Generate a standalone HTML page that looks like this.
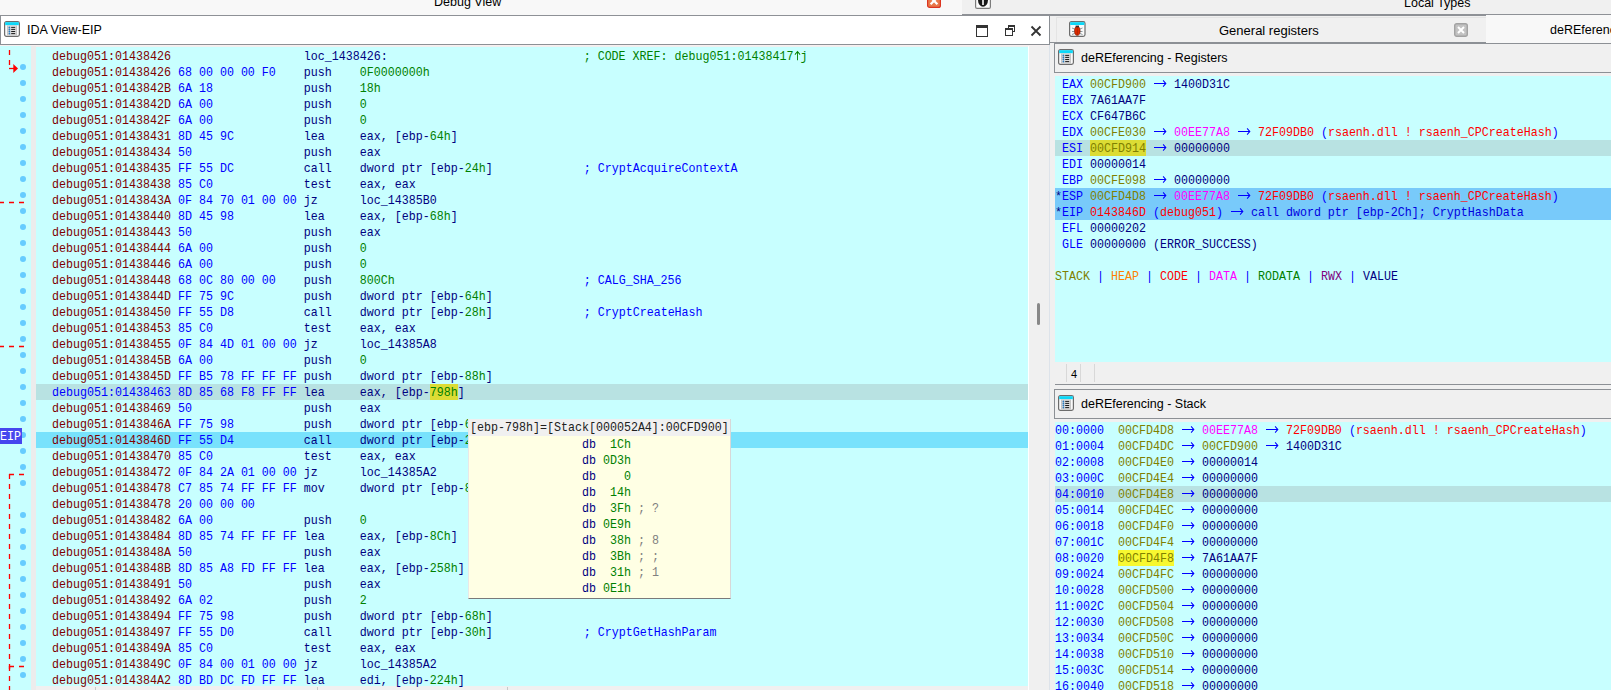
<!DOCTYPE html><html><head><meta charset="utf-8"><style>
*{margin:0;padding:0;box-sizing:border-box}
html,body{width:1611px;height:690px;overflow:hidden;background:#f0f0f0;position:relative}
.a{position:absolute}
.sans{font-family:"Liberation Sans",sans-serif;font-size:12.5px;color:#000;white-space:pre}
.m{font-family:"Liberation Mono",monospace;font-size:11.667px;line-height:16px;height:16px;white-space:pre;position:absolute;transform:translateY(1px) scaleY(1.17);transform-origin:0 11.1px}
.ar{display:inline-block;width:14px;height:16px;vertical-align:top;position:relative}
</style></head><body><div class="a" style="left:0;top:0;width:962px;height:15px;background:#f8f8f8"></div>
<div class="a" style="left:962px;top:0;width:649px;height:15px;background:#f0f0f0"></div>
<div class="a" style="left:0;top:15px;width:962px;height:1px;background:#8e9196"></div>
<div class="a" style="left:962px;top:14px;width:649px;height:2px;background:#8e9196"></div>
<div class="a sans" style="left:434px;top:-5.5px;line-height:15px">Debug View</div>
<div class="a sans" style="left:1404px;top:-4px;line-height:15px">Local Types</div>
<svg class="a" style="left:927px;top:-7px" width="14" height="15"><rect x="0.6" y="0.6" width="12.8" height="13.8" rx="2" fill="#e8784a" stroke="#dc3420" stroke-width="1.2"/><path d="M3.6 4.5L10.4 11.2M10.4 4.5L3.6 11.2" stroke="#fff" stroke-width="2.2"/></svg>
<svg class="a" style="left:975px;top:-7px" width="16" height="16"><rect x="0.6" y="0.6" width="14.8" height="14.8" rx="1.5" fill="#fcfcfc" stroke="#7c7c7c" stroke-width="1.2"/><ellipse cx="8" cy="7" rx="5" ry="6.8" fill="#1a1a1a"/><path d="M8 6.5V12" stroke="#fff" stroke-width="1.6"/></svg>
<div class="a" style="left:0;top:16px;width:1050px;height:29px;background:#fff;border:1px solid #8c9095;border-top:none"></div>
<svg class="a" style="left:4px;top:21px" width="16" height="16"><rect x="0.6" y="0.6" width="14.8" height="14.8" rx="1.8" fill="#fafafa" stroke="#6c6c6c" stroke-width="1.2"/><rect x="1.2" y="1.2" width="13.6" height="3" fill="#0cd8f8"/><rect x="3" y="4.4" width="10" height="10" fill="#c4c4c4"/><rect x="4" y="5" width="8" height="8.6" fill="#dcdcdc"/><g fill="#2a7cc0"><circle cx="5.4" cy="6.4" r="0.9"/><circle cx="5.4" cy="8.4" r="0.9"/><circle cx="5.4" cy="10.5" r="0.9"/><circle cx="5.4" cy="12.6" r="0.9"/></g><g stroke="#1c1c1c" stroke-width="1"><path d="M7.2 6.4H11.2M7.2 8.4H11.2M7.2 10.5H11.2M7.2 12.6H11.2"/></g></svg>
<div class="a sans" style="left:27px;top:23px;line-height:15px">IDA View-EIP</div>
<div class="a" style="left:976px;top:25px;width:12px;height:12px;border:1.3px solid #333;border-top:3.5px solid #333"></div>
<div class="a" style="left:1008px;top:25px;width:7px;height:7px;border:1.3px solid #333;border-top:2.5px solid #333"></div>
<div class="a" style="left:1005px;top:28px;width:8px;height:8px;background:#fff;border:1.3px solid #333;border-top:2.5px solid #333"></div>
<svg class="a" style="left:1030px;top:25px" width="12" height="12"><path d="M1.5 1.5L10.5 10.5M10.5 1.5L1.5 10.5" stroke="#333" stroke-width="1.8"/></svg>
<div class="a" style="left:0;top:45px;width:1050px;height:1px;background:#f6f0f0"></div>
<div class="a" style="left:0;top:46px;width:31px;height:644px;background:#c8ffff"></div>
<div class="a" style="left:31px;top:46px;width:5px;height:644px;background:#ececec"></div>
<div class="a" style="left:36px;top:47px;width:992px;height:639px;background:#c8ffff"></div>
<div class="a" style="left:36px;top:686px;width:992px;height:4px;background:#f0f0f0"></div>
<div class="a" style="left:1028px;top:46px;width:1px;height:644px;background:#fff"></div>
<div class="a" style="left:95px;top:687px;width:1px;height:3px;background:#c8c8c8"></div>
<div class="a" style="left:317px;top:687px;width:1px;height:3px;background:#c8c8c8"></div>
<div class="a" style="left:507px;top:687px;width:1px;height:3px;background:#c8c8c8"></div>
<div class="a" style="left:1029px;top:46px;width:20px;height:644px;background:#f0f0f0"></div>
<div class="a" style="left:1049px;top:46px;width:1px;height:644px;background:#dde3ea"></div>
<div class="a" style="left:1037px;top:303px;width:3px;height:22px;background:#888;border-radius:2px"></div>
<div class="a" style="left:36px;top:384px;width:992px;height:16px;background:#b8e2e2"></div>
<div class="a" style="left:36px;top:432px;width:992px;height:16px;background:#78e2fc"></div>
<div class="a" style="left:430px;top:384px;width:28px;height:16px;background:#dcdc34"></div>
<div class="m" style="left:52px;top:48px"><span style="color:#800000">debug051:01438426</span>                   <span style="color:#000080">loc_1438426:</span>                            <span style="color:#008000">; CODE XREF: debug051:01438417</span><svg class="ar" width="7" height="16" style="width:7px"><path d="M3.5 3.6V11.2M0.9 6.4L3.5 3.8L6.1 6.4" stroke="#008000" stroke-width="0.9" fill="none"/></svg><span style="color:#008000">j</span></div>
<div class="m" style="left:52px;top:64px"><span style="color:#800000">debug051:01438426</span> <span style="color:#0000ff">68 00 00 00 F0   </span> <span style="color:#000080">push    </span><span style="color:#008000">0F0000000h</span></div>
<div class="m" style="left:52px;top:80px"><span style="color:#800000">debug051:0143842B</span> <span style="color:#0000ff">6A 18            </span> <span style="color:#000080">push    </span><span style="color:#008000">18h</span></div>
<div class="m" style="left:52px;top:96px"><span style="color:#800000">debug051:0143842D</span> <span style="color:#0000ff">6A 00            </span> <span style="color:#000080">push    </span><span style="color:#008000">0</span></div>
<div class="m" style="left:52px;top:112px"><span style="color:#800000">debug051:0143842F</span> <span style="color:#0000ff">6A 00            </span> <span style="color:#000080">push    </span><span style="color:#008000">0</span></div>
<div class="m" style="left:52px;top:128px"><span style="color:#800000">debug051:01438431</span> <span style="color:#0000ff">8D 45 9C         </span> <span style="color:#000080">lea     </span><span style="color:#000080">eax, [ebp-</span><span style="color:#008000">64h</span><span style="color:#000080">]</span></div>
<div class="m" style="left:52px;top:144px"><span style="color:#800000">debug051:01438434</span> <span style="color:#0000ff">50               </span> <span style="color:#000080">push    </span><span style="color:#000080">eax</span></div>
<div class="m" style="left:52px;top:160px"><span style="color:#800000">debug051:01438435</span> <span style="color:#0000ff">FF 55 DC         </span> <span style="color:#000080">call    </span><span style="color:#000080">dword ptr [ebp-</span><span style="color:#008000">24h</span><span style="color:#000080">]</span>             <span style="color:#0000ff">; CryptAcquireContextA</span></div>
<div class="m" style="left:52px;top:176px"><span style="color:#800000">debug051:01438438</span> <span style="color:#0000ff">85 C0            </span> <span style="color:#000080">test    </span><span style="color:#000080">eax, eax</span></div>
<div class="m" style="left:52px;top:192px"><span style="color:#800000">debug051:0143843A</span> <span style="color:#0000ff">0F 84 70 01 00 00</span> <span style="color:#000080">jz      </span><span style="color:#000080">loc_14385B0</span></div>
<div class="m" style="left:52px;top:208px"><span style="color:#800000">debug051:01438440</span> <span style="color:#0000ff">8D 45 98         </span> <span style="color:#000080">lea     </span><span style="color:#000080">eax, [ebp-</span><span style="color:#008000">68h</span><span style="color:#000080">]</span></div>
<div class="m" style="left:52px;top:224px"><span style="color:#800000">debug051:01438443</span> <span style="color:#0000ff">50               </span> <span style="color:#000080">push    </span><span style="color:#000080">eax</span></div>
<div class="m" style="left:52px;top:240px"><span style="color:#800000">debug051:01438444</span> <span style="color:#0000ff">6A 00            </span> <span style="color:#000080">push    </span><span style="color:#008000">0</span></div>
<div class="m" style="left:52px;top:256px"><span style="color:#800000">debug051:01438446</span> <span style="color:#0000ff">6A 00            </span> <span style="color:#000080">push    </span><span style="color:#008000">0</span></div>
<div class="m" style="left:52px;top:272px"><span style="color:#800000">debug051:01438448</span> <span style="color:#0000ff">68 0C 80 00 00   </span> <span style="color:#000080">push    </span><span style="color:#008000">800Ch</span>                           <span style="color:#0000ff">; CALG_SHA_256</span></div>
<div class="m" style="left:52px;top:288px"><span style="color:#800000">debug051:0143844D</span> <span style="color:#0000ff">FF 75 9C         </span> <span style="color:#000080">push    </span><span style="color:#000080">dword ptr [ebp-</span><span style="color:#008000">64h</span><span style="color:#000080">]</span></div>
<div class="m" style="left:52px;top:304px"><span style="color:#800000">debug051:01438450</span> <span style="color:#0000ff">FF 55 D8         </span> <span style="color:#000080">call    </span><span style="color:#000080">dword ptr [ebp-</span><span style="color:#008000">28h</span><span style="color:#000080">]</span>             <span style="color:#0000ff">; CryptCreateHash</span></div>
<div class="m" style="left:52px;top:320px"><span style="color:#800000">debug051:01438453</span> <span style="color:#0000ff">85 C0            </span> <span style="color:#000080">test    </span><span style="color:#000080">eax, eax</span></div>
<div class="m" style="left:52px;top:336px"><span style="color:#800000">debug051:01438455</span> <span style="color:#0000ff">0F 84 4D 01 00 00</span> <span style="color:#000080">jz      </span><span style="color:#000080">loc_14385A8</span></div>
<div class="m" style="left:52px;top:352px"><span style="color:#800000">debug051:0143845B</span> <span style="color:#0000ff">6A 00            </span> <span style="color:#000080">push    </span><span style="color:#008000">0</span></div>
<div class="m" style="left:52px;top:368px"><span style="color:#800000">debug051:0143845D</span> <span style="color:#0000ff">FF B5 78 FF FF FF</span> <span style="color:#000080">push    </span><span style="color:#000080">dword ptr [ebp-</span><span style="color:#008000">88h</span><span style="color:#000080">]</span></div>
<div class="m" style="left:52px;top:384px"><span style="color:#0000ff">debug051:01438463</span> <span style="color:#0000ff">8D 85 68 F8 FF FF</span> <span style="color:#000080">lea     </span><span style="color:#000080">eax, [ebp-</span><span style="color:#008000">798h</span><span style="color:#000080">]</span></div>
<div class="m" style="left:52px;top:400px"><span style="color:#800000">debug051:01438469</span> <span style="color:#0000ff">50               </span> <span style="color:#000080">push    </span><span style="color:#000080">eax</span></div>
<div class="m" style="left:52px;top:416px"><span style="color:#800000">debug051:0143846A</span> <span style="color:#0000ff">FF 75 98         </span> <span style="color:#000080">push    </span><span style="color:#000080">dword ptr [ebp-</span><span style="color:#008000">68h</span><span style="color:#000080">]</span></div>
<div class="m" style="left:52px;top:432px"><span style="color:#800000">debug051:0143846D</span> <span style="color:#0000ff">FF 55 D4         </span> <span style="color:#000080">call    </span><span style="color:#000080">dword ptr [ebp-</span><span style="color:#008000">2Ch</span><span style="color:#000080">]</span></div>
<div class="m" style="left:52px;top:448px"><span style="color:#800000">debug051:01438470</span> <span style="color:#0000ff">85 C0            </span> <span style="color:#000080">test    </span><span style="color:#000080">eax, eax</span></div>
<div class="m" style="left:52px;top:464px"><span style="color:#800000">debug051:01438472</span> <span style="color:#0000ff">0F 84 2A 01 00 00</span> <span style="color:#000080">jz      </span><span style="color:#000080">loc_14385A2</span></div>
<div class="m" style="left:52px;top:480px"><span style="color:#800000">debug051:01438478</span> <span style="color:#0000ff">C7 85 74 FF FF FF</span> <span style="color:#000080">mov     </span><span style="color:#000080">dword ptr [ebp-</span><span style="color:#008000">8Ch</span><span style="color:#000080">], </span><span style="color:#008000">20h</span></div>
<div class="m" style="left:52px;top:496px"><span style="color:#800000">debug051:01438478</span> <span style="color:#0000ff">20 00 00 00      </span></div>
<div class="m" style="left:52px;top:512px"><span style="color:#800000">debug051:01438482</span> <span style="color:#0000ff">6A 00            </span> <span style="color:#000080">push    </span><span style="color:#008000">0</span></div>
<div class="m" style="left:52px;top:528px"><span style="color:#800000">debug051:01438484</span> <span style="color:#0000ff">8D 85 74 FF FF FF</span> <span style="color:#000080">lea     </span><span style="color:#000080">eax, [ebp-</span><span style="color:#008000">8Ch</span><span style="color:#000080">]</span></div>
<div class="m" style="left:52px;top:544px"><span style="color:#800000">debug051:0143848A</span> <span style="color:#0000ff">50               </span> <span style="color:#000080">push    </span><span style="color:#000080">eax</span></div>
<div class="m" style="left:52px;top:560px"><span style="color:#800000">debug051:0143848B</span> <span style="color:#0000ff">8D 85 A8 FD FF FF</span> <span style="color:#000080">lea     </span><span style="color:#000080">eax, [ebp-</span><span style="color:#008000">258h</span><span style="color:#000080">]</span></div>
<div class="m" style="left:52px;top:576px"><span style="color:#800000">debug051:01438491</span> <span style="color:#0000ff">50               </span> <span style="color:#000080">push    </span><span style="color:#000080">eax</span></div>
<div class="m" style="left:52px;top:592px"><span style="color:#800000">debug051:01438492</span> <span style="color:#0000ff">6A 02            </span> <span style="color:#000080">push    </span><span style="color:#008000">2</span></div>
<div class="m" style="left:52px;top:608px"><span style="color:#800000">debug051:01438494</span> <span style="color:#0000ff">FF 75 98         </span> <span style="color:#000080">push    </span><span style="color:#000080">dword ptr [ebp-</span><span style="color:#008000">68h</span><span style="color:#000080">]</span></div>
<div class="m" style="left:52px;top:624px"><span style="color:#800000">debug051:01438497</span> <span style="color:#0000ff">FF 55 D0         </span> <span style="color:#000080">call    </span><span style="color:#000080">dword ptr [ebp-</span><span style="color:#008000">30h</span><span style="color:#000080">]</span>             <span style="color:#0000ff">; CryptGetHashParam</span></div>
<div class="m" style="left:52px;top:640px"><span style="color:#800000">debug051:0143849A</span> <span style="color:#0000ff">85 C0            </span> <span style="color:#000080">test    </span><span style="color:#000080">eax, eax</span></div>
<div class="m" style="left:52px;top:656px"><span style="color:#800000">debug051:0143849C</span> <span style="color:#0000ff">0F 84 00 01 00 00</span> <span style="color:#000080">jz      </span><span style="color:#000080">loc_14385A2</span></div>
<div class="m" style="left:52px;top:672px"><span style="color:#800000">debug051:014384A2</span> <span style="color:#0000ff">8D BD DC FD FF FF</span> <span style="color:#000080">lea     </span><span style="color:#000080">edi, [ebp-</span><span style="color:#008000">224h</span><span style="color:#000080">]</span></div>
<div class="a" style="left:20px;top:64px;width:6px;height:6px;border-radius:50%;background:#66ccff"></div>
<div class="a" style="left:20px;top:80px;width:6px;height:6px;border-radius:50%;background:#66ccff"></div>
<div class="a" style="left:20px;top:96px;width:6px;height:6px;border-radius:50%;background:#66ccff"></div>
<div class="a" style="left:20px;top:112px;width:6px;height:6px;border-radius:50%;background:#66ccff"></div>
<div class="a" style="left:20px;top:128px;width:6px;height:6px;border-radius:50%;background:#66ccff"></div>
<div class="a" style="left:20px;top:144px;width:6px;height:6px;border-radius:50%;background:#66ccff"></div>
<div class="a" style="left:20px;top:160px;width:6px;height:6px;border-radius:50%;background:#66ccff"></div>
<div class="a" style="left:20px;top:176px;width:6px;height:6px;border-radius:50%;background:#66ccff"></div>
<div class="a" style="left:20px;top:192px;width:6px;height:6px;border-radius:50%;background:#66ccff"></div>
<div class="a" style="left:20px;top:208px;width:6px;height:6px;border-radius:50%;background:#66ccff"></div>
<div class="a" style="left:20px;top:224px;width:6px;height:6px;border-radius:50%;background:#66ccff"></div>
<div class="a" style="left:20px;top:240px;width:6px;height:6px;border-radius:50%;background:#66ccff"></div>
<div class="a" style="left:20px;top:256px;width:6px;height:6px;border-radius:50%;background:#66ccff"></div>
<div class="a" style="left:20px;top:272px;width:6px;height:6px;border-radius:50%;background:#66ccff"></div>
<div class="a" style="left:20px;top:288px;width:6px;height:6px;border-radius:50%;background:#66ccff"></div>
<div class="a" style="left:20px;top:304px;width:6px;height:6px;border-radius:50%;background:#66ccff"></div>
<div class="a" style="left:20px;top:320px;width:6px;height:6px;border-radius:50%;background:#66ccff"></div>
<div class="a" style="left:20px;top:336px;width:6px;height:6px;border-radius:50%;background:#66ccff"></div>
<div class="a" style="left:20px;top:352px;width:6px;height:6px;border-radius:50%;background:#66ccff"></div>
<div class="a" style="left:20px;top:368px;width:6px;height:6px;border-radius:50%;background:#66ccff"></div>
<div class="a" style="left:20px;top:384px;width:6px;height:6px;border-radius:50%;background:#66ccff"></div>
<div class="a" style="left:20px;top:400px;width:6px;height:6px;border-radius:50%;background:#66ccff"></div>
<div class="a" style="left:20px;top:416px;width:6px;height:6px;border-radius:50%;background:#66ccff"></div>
<div class="a" style="left:20px;top:432px;width:6px;height:6px;border-radius:50%;background:#66ccff"></div>
<div class="a" style="left:20px;top:448px;width:6px;height:6px;border-radius:50%;background:#66ccff"></div>
<div class="a" style="left:20px;top:464px;width:6px;height:6px;border-radius:50%;background:#66ccff"></div>
<div class="a" style="left:20px;top:480px;width:6px;height:6px;border-radius:50%;background:#66ccff"></div>
<div class="a" style="left:20px;top:512px;width:6px;height:6px;border-radius:50%;background:#66ccff"></div>
<div class="a" style="left:20px;top:528px;width:6px;height:6px;border-radius:50%;background:#66ccff"></div>
<div class="a" style="left:20px;top:544px;width:6px;height:6px;border-radius:50%;background:#66ccff"></div>
<div class="a" style="left:20px;top:560px;width:6px;height:6px;border-radius:50%;background:#66ccff"></div>
<div class="a" style="left:20px;top:576px;width:6px;height:6px;border-radius:50%;background:#66ccff"></div>
<div class="a" style="left:20px;top:592px;width:6px;height:6px;border-radius:50%;background:#66ccff"></div>
<div class="a" style="left:20px;top:608px;width:6px;height:6px;border-radius:50%;background:#66ccff"></div>
<div class="a" style="left:20px;top:624px;width:6px;height:6px;border-radius:50%;background:#66ccff"></div>
<div class="a" style="left:20px;top:640px;width:6px;height:6px;border-radius:50%;background:#66ccff"></div>
<div class="a" style="left:20px;top:656px;width:6px;height:6px;border-radius:50%;background:#66ccff"></div>
<div class="a" style="left:20px;top:672px;width:6px;height:6px;border-radius:50%;background:#66ccff"></div>
<svg class="a" style="left:0;top:0" width="32" height="690"><line x1="9.5" y1="50" x2="9.5" y2="68" stroke="#ff0000" stroke-width="1.3" stroke-dasharray="5 5"/><line x1="9" y1="68.5" x2="14" y2="68.5" stroke="#ff0000" stroke-width="1.3"/><path d="M13.3 64 L18 68.5 L13.3 73 Z" fill="#ff0000"/><line x1="-1" y1="202.5" x2="24" y2="202.5" stroke="#ff0000" stroke-width="1.3" stroke-dasharray="5 5"/><line x1="-1" y1="346.5" x2="24" y2="346.5" stroke="#ff0000" stroke-width="1.3" stroke-dasharray="5 5"/><line x1="9" y1="474.5" x2="24" y2="474.5" stroke="#ff0000" stroke-width="1.3" stroke-dasharray="5 5"/><line x1="9.5" y1="474" x2="9.5" y2="669" stroke="#ff0000" stroke-width="1.3" stroke-dasharray="5 5"/><line x1="9.5" y1="666" x2="9.5" y2="690" stroke="#ff0000" stroke-width="1.3" stroke-dasharray="5 5"/><line x1="9" y1="666.5" x2="24" y2="666.5" stroke="#ff0000" stroke-width="1.3" stroke-dasharray="5 5"/></svg>
<div class="a" style="left:0;top:428px;width:22px;height:16px;background:#4646ee"></div>
<div class="m" style="left:0px;top:428px;color:#fff">EIP</div>
<div class="a" style="left:468px;top:419px;width:263px;height:180px;background:#ffffe4;border-right:1px solid #d8d8d8;border-bottom:1px solid #7a7a7a;border-left:1px solid #e8e8e8"></div>
<div class="a" style="left:469px;top:419px;width:261px;height:17px;background:#f0f0f0"></div>
<div class="m" style="left:470px;top:419px;color:#202020">[ebp-798h]=[Stack[000052A4]:00CFD900]</div>
<div class="m" style="left:582px;top:436px"><span style="color:#000080">db </span><span style="color:#008000"> 1Ch</span></div>
<div class="m" style="left:582px;top:452px"><span style="color:#000080">db </span><span style="color:#008000">0D3h</span></div>
<div class="m" style="left:582px;top:468px"><span style="color:#000080">db </span><span style="color:#008000">   0</span></div>
<div class="m" style="left:582px;top:484px"><span style="color:#000080">db </span><span style="color:#008000"> 14h</span></div>
<div class="m" style="left:582px;top:500px"><span style="color:#000080">db </span><span style="color:#008000"> 3Fh</span><span style="color:#808080"> ; ?</span></div>
<div class="m" style="left:582px;top:516px"><span style="color:#000080">db </span><span style="color:#008000">0E9h</span></div>
<div class="m" style="left:582px;top:532px"><span style="color:#000080">db </span><span style="color:#008000"> 38h</span><span style="color:#808080"> ; 8</span></div>
<div class="m" style="left:582px;top:548px"><span style="color:#000080">db </span><span style="color:#008000"> 3Bh</span><span style="color:#808080"> ; ;</span></div>
<div class="m" style="left:582px;top:564px"><span style="color:#000080">db </span><span style="color:#008000"> 31h</span><span style="color:#808080"> ; 1</span></div>
<div class="m" style="left:582px;top:580px"><span style="color:#000080">db </span><span style="color:#008000">0E1h</span></div>
<div class="a" style="left:1056px;top:17px;width:430px;height:26px;background:#f0f0f0;border-top:1px solid #e4e4e4;border-left:1px solid #e4e4e4"></div>
<div class="a" style="left:1486px;top:15px;width:125px;height:28px;background:#f8f8f8"></div>
<div class="a" style="left:1050px;top:42px;width:436px;height:1px;background:#8c9095"></div>
<div class="a" style="left:1486px;top:43px;width:125px;height:1px;background:#8c9095"></div>
<svg class="a" style="left:1069px;top:21px" width="17" height="16"><rect x="0.6" y="0.6" width="15.4" height="14.8" rx="1.8" fill="#fafafa" stroke="#6c6c6c" stroke-width="1.2"/><rect x="1.2" y="1.2" width="14.2" height="2.8" fill="#0cd8f8"/><g stroke="#8a9aa0" stroke-width="1"><path d="M3 7L5.5 8M3 10.5H5.5M3 13.5L5.5 12.5M13.5 7L11 8M13.5 10.5H11M13.5 13.5L11 12.5"/></g><ellipse cx="8.3" cy="10" rx="2.8" ry="4.4" fill="#e02a00" stroke="#6a1a08" stroke-width="0.6"/><rect x="6.6" y="4.6" width="3.4" height="1.6" fill="#3a2a2a"/><path d="M8.3 6V14" stroke="#902000" stroke-width="0.6"/></svg>
<div class="a sans" style="left:1219px;top:23px;line-height:15px;font-size:13px">General registers</div>
<svg class="a" style="left:1454px;top:23px" width="14" height="14"><rect x="0.7" y="0.7" width="12.6" height="12.6" rx="2" fill="#c2c2c2" stroke="#a2a2a2" stroke-width="1.4"/><path d="M4 4L10 10M10 4L4 10" stroke="#fff" stroke-width="2"/></svg>
<div class="a sans" style="left:1550px;top:23px;line-height:15px">deREferencing</div>
<div class="a" style="left:1054px;top:43px;width:557px;height:30px;background:#f0f0f0;border:1px solid #8c9095;border-right:none"></div>
<svg class="a" style="left:1058px;top:49px" width="16" height="16"><rect x="0.6" y="0.6" width="14.8" height="14.8" rx="1.8" fill="#fafafa" stroke="#6c6c6c" stroke-width="1.2"/><rect x="1.2" y="1.2" width="13.6" height="3" fill="#0cd8f8"/><rect x="3" y="4.4" width="10" height="10" fill="#c4c4c4"/><rect x="4" y="5" width="8" height="8.6" fill="#dcdcdc"/><g fill="#2a7cc0"><circle cx="5.4" cy="6.4" r="0.9"/><circle cx="5.4" cy="8.4" r="0.9"/><circle cx="5.4" cy="10.5" r="0.9"/><circle cx="5.4" cy="12.6" r="0.9"/></g><g stroke="#1c1c1c" stroke-width="1"><path d="M7.2 6.4H11.2M7.2 8.4H11.2M7.2 10.5H11.2M7.2 12.6H11.2"/></g></svg>
<div class="a sans" style="left:1081px;top:51px;line-height:15px">deREferencing - Registers</div>
<div class="a" style="left:1055px;top:76px;width:556px;height:286px;background:#c8ffff"></div>
<div class="a" style="left:1049px;top:45px;width:1px;height:645px;background:#dde3ea"></div>
<div class="a" style="left:1055px;top:140px;width:556px;height:16px;background:#b8e2e2"></div>
<div class="a" style="left:1055px;top:188px;width:556px;height:32px;background:#78cafa"></div>
<div class="a" style="left:1090px;top:140px;width:56px;height:16px;background:#dcdc34"></div>
<div class="m" style="left:1055px;top:76px"><span style="color:#0000ff"> EAX </span><span style="color:#808000">00CFD900</span> <svg class="ar" width="14" height="16"><path d="M1 7.2H12.6M10.1 4.5L12.8 7.2L10.1 9.9" stroke="#0000ff" stroke-width="1" fill="none"/></svg> <span style="color:#000080">1400D31C</span></div>
<div class="m" style="left:1055px;top:92px"><span style="color:#0000ff"> EBX </span><span style="color:#000080">7A61AA7F</span></div>
<div class="m" style="left:1055px;top:108px"><span style="color:#0000ff"> ECX </span><span style="color:#000080">CF647B6C</span></div>
<div class="m" style="left:1055px;top:124px"><span style="color:#0000ff"> EDX </span><span style="color:#808000">00CFE030</span> <svg class="ar" width="14" height="16"><path d="M1 7.2H12.6M10.1 4.5L12.8 7.2L10.1 9.9" stroke="#0000ff" stroke-width="1" fill="none"/></svg> <span style="color:#ff00ff">00EE77A8</span> <svg class="ar" width="14" height="16"><path d="M1 7.2H12.6M10.1 4.5L12.8 7.2L10.1 9.9" stroke="#0000ff" stroke-width="1" fill="none"/></svg> <span style="color:#ff0000">72F09DB0</span> <span style="color:#0000ff">(</span><span style="color:#ff0000">rsaenh.dll ! rsaenh_CPCreateHash</span><span style="color:#0000ff">)</span></div>
<div class="m" style="left:1055px;top:140px"><span style="color:#0000ff"> ESI </span><span style="color:#808000">00CFD914</span> <svg class="ar" width="14" height="16"><path d="M1 7.2H12.6M10.1 4.5L12.8 7.2L10.1 9.9" stroke="#0000ff" stroke-width="1" fill="none"/></svg> <span style="color:#000080">00000000</span></div>
<div class="m" style="left:1055px;top:156px"><span style="color:#0000ff"> EDI </span><span style="color:#000080">00000014</span></div>
<div class="m" style="left:1055px;top:172px"><span style="color:#0000ff"> EBP </span><span style="color:#808000">00CFE098</span> <svg class="ar" width="14" height="16"><path d="M1 7.2H12.6M10.1 4.5L12.8 7.2L10.1 9.9" stroke="#0000ff" stroke-width="1" fill="none"/></svg> <span style="color:#000080">00000000</span></div>
<div class="m" style="left:1055px;top:188px"><span style="color:#000080">*</span><span style="color:#0000ff">ESP </span><span style="color:#808000">00CFD4D8</span> <svg class="ar" width="14" height="16"><path d="M1 7.2H12.6M10.1 4.5L12.8 7.2L10.1 9.9" stroke="#0000ff" stroke-width="1" fill="none"/></svg> <span style="color:#ff00ff">00EE77A8</span> <svg class="ar" width="14" height="16"><path d="M1 7.2H12.6M10.1 4.5L12.8 7.2L10.1 9.9" stroke="#0000ff" stroke-width="1" fill="none"/></svg> <span style="color:#ff0000">72F09DB0</span> <span style="color:#0000ff">(</span><span style="color:#ff0000">rsaenh.dll ! rsaenh_CPCreateHash</span><span style="color:#0000ff">)</span></div>
<div class="m" style="left:1055px;top:204px"><span style="color:#000080">*</span><span style="color:#0000ff">EIP </span><span style="color:#ff0000">0143846D</span> <span style="color:#0000ff">(</span><span style="color:#ff0000">debug051</span><span style="color:#0000ff">)</span> <svg class="ar" width="14" height="16"><path d="M1 7.2H12.6M10.1 4.5L12.8 7.2L10.1 9.9" stroke="#0000ff" stroke-width="1" fill="none"/></svg> <span style="color:#0000e0">call dword ptr [ebp-2Ch]; CryptHashData</span></div>
<div class="m" style="left:1055px;top:220px"><span style="color:#0000ff"> EFL </span><span style="color:#000080">00000202</span></div>
<div class="m" style="left:1055px;top:236px"><span style="color:#0000ff"> GLE </span><span style="color:#000080">00000000 (ERROR_SUCCESS)</span></div>
<div class="m" style="left:1055px;top:268px"><span style="color:#808000">STACK</span><span style="color:#0000ff"> | </span><span style="color:#ff8000">HEAP</span><span style="color:#0000ff"> | </span><span style="color:#ff0000">CODE</span><span style="color:#0000ff"> | </span><span style="color:#ff00ff">DATA</span><span style="color:#0000ff"> | </span><span style="color:#008000">RODATA</span><span style="color:#0000ff"> | </span><span style="color:#800080">RWX</span><span style="color:#0000ff"> | </span><span style="color:#000080">VALUE</span></div>
<div class="a" style="left:1066px;top:364px;width:1px;height:18px;background:#d8d8d8"></div>
<div class="a" style="left:1080px;top:364px;width:1px;height:18px;background:#d8d8d8"></div>
<div class="a" style="left:1094px;top:364px;width:1px;height:18px;background:#d8d8d8"></div>
<div class="a sans" style="left:1071px;top:367px;line-height:15px;font-size:11px">4</div>
<div class="a" style="left:1055px;top:384px;width:556px;height:1px;background:#8c9095"></div>
<div class="a" style="left:1054px;top:389px;width:557px;height:30px;background:#f0f0f0;border:1px solid #8c9095;border-right:none"></div>
<svg class="a" style="left:1058px;top:395px" width="16" height="16"><rect x="0.6" y="0.6" width="14.8" height="14.8" rx="1.8" fill="#fafafa" stroke="#6c6c6c" stroke-width="1.2"/><rect x="1.2" y="1.2" width="13.6" height="3" fill="#0cd8f8"/><rect x="3" y="4.4" width="10" height="10" fill="#c4c4c4"/><rect x="4" y="5" width="8" height="8.6" fill="#dcdcdc"/><g fill="#2a7cc0"><circle cx="5.4" cy="6.4" r="0.9"/><circle cx="5.4" cy="8.4" r="0.9"/><circle cx="5.4" cy="10.5" r="0.9"/><circle cx="5.4" cy="12.6" r="0.9"/></g><g stroke="#1c1c1c" stroke-width="1"><path d="M7.2 6.4H11.2M7.2 8.4H11.2M7.2 10.5H11.2M7.2 12.6H11.2"/></g></svg>
<div class="a sans" style="left:1081px;top:397px;line-height:15px">deREferencing - Stack</div>
<div class="a" style="left:1055px;top:422px;width:556px;height:268px;background:#c8ffff"></div>
<div class="a" style="left:1055px;top:486px;width:556px;height:16px;background:#b8e2e2"></div>
<div class="a" style="left:1118px;top:550px;width:56px;height:16px;background:#f8f830"></div>
<div class="m" style="left:1055px;top:422px"><span style="color:#0000ff">00:0000</span>  <span style="color:#808000">00CFD4D8</span> <svg class="ar" width="14" height="16"><path d="M1 7.2H12.6M10.1 4.5L12.8 7.2L10.1 9.9" stroke="#0000ff" stroke-width="1" fill="none"/></svg> <span style="color:#ff00ff">00EE77A8</span> <svg class="ar" width="14" height="16"><path d="M1 7.2H12.6M10.1 4.5L12.8 7.2L10.1 9.9" stroke="#0000ff" stroke-width="1" fill="none"/></svg> <span style="color:#ff0000">72F09DB0</span> <span style="color:#0000ff">(</span><span style="color:#ff0000">rsaenh.dll ! rsaenh_CPCreateHash</span><span style="color:#0000ff">)</span></div>
<div class="m" style="left:1055px;top:438px"><span style="color:#0000ff">01:0004</span>  <span style="color:#808000">00CFD4DC</span> <svg class="ar" width="14" height="16"><path d="M1 7.2H12.6M10.1 4.5L12.8 7.2L10.1 9.9" stroke="#0000ff" stroke-width="1" fill="none"/></svg> <span style="color:#808000">00CFD900</span> <svg class="ar" width="14" height="16"><path d="M1 7.2H12.6M10.1 4.5L12.8 7.2L10.1 9.9" stroke="#0000ff" stroke-width="1" fill="none"/></svg> <span style="color:#000080">1400D31C</span></div>
<div class="m" style="left:1055px;top:454px"><span style="color:#0000ff">02:0008</span>  <span style="color:#808000">00CFD4E0</span> <svg class="ar" width="14" height="16"><path d="M1 7.2H12.6M10.1 4.5L12.8 7.2L10.1 9.9" stroke="#0000ff" stroke-width="1" fill="none"/></svg> <span style="color:#000080">00000014</span></div>
<div class="m" style="left:1055px;top:470px"><span style="color:#0000ff">03:000C</span>  <span style="color:#808000">00CFD4E4</span> <svg class="ar" width="14" height="16"><path d="M1 7.2H12.6M10.1 4.5L12.8 7.2L10.1 9.9" stroke="#0000ff" stroke-width="1" fill="none"/></svg> <span style="color:#000080">00000000</span></div>
<div class="m" style="left:1055px;top:486px"><span style="color:#0000ff">04:0010</span>  <span style="color:#808000">00CFD4E8</span> <svg class="ar" width="14" height="16"><path d="M1 7.2H12.6M10.1 4.5L12.8 7.2L10.1 9.9" stroke="#0000ff" stroke-width="1" fill="none"/></svg> <span style="color:#000080">00000000</span></div>
<div class="m" style="left:1055px;top:502px"><span style="color:#0000ff">05:0014</span>  <span style="color:#808000">00CFD4EC</span> <svg class="ar" width="14" height="16"><path d="M1 7.2H12.6M10.1 4.5L12.8 7.2L10.1 9.9" stroke="#0000ff" stroke-width="1" fill="none"/></svg> <span style="color:#000080">00000000</span></div>
<div class="m" style="left:1055px;top:518px"><span style="color:#0000ff">06:0018</span>  <span style="color:#808000">00CFD4F0</span> <svg class="ar" width="14" height="16"><path d="M1 7.2H12.6M10.1 4.5L12.8 7.2L10.1 9.9" stroke="#0000ff" stroke-width="1" fill="none"/></svg> <span style="color:#000080">00000000</span></div>
<div class="m" style="left:1055px;top:534px"><span style="color:#0000ff">07:001C</span>  <span style="color:#808000">00CFD4F4</span> <svg class="ar" width="14" height="16"><path d="M1 7.2H12.6M10.1 4.5L12.8 7.2L10.1 9.9" stroke="#0000ff" stroke-width="1" fill="none"/></svg> <span style="color:#000080">00000000</span></div>
<div class="m" style="left:1055px;top:550px"><span style="color:#0000ff">08:0020</span>  <span style="color:#808000">00CFD4F8</span> <svg class="ar" width="14" height="16"><path d="M1 7.2H12.6M10.1 4.5L12.8 7.2L10.1 9.9" stroke="#0000ff" stroke-width="1" fill="none"/></svg> <span style="color:#000080">7A61AA7F</span></div>
<div class="m" style="left:1055px;top:566px"><span style="color:#0000ff">09:0024</span>  <span style="color:#808000">00CFD4FC</span> <svg class="ar" width="14" height="16"><path d="M1 7.2H12.6M10.1 4.5L12.8 7.2L10.1 9.9" stroke="#0000ff" stroke-width="1" fill="none"/></svg> <span style="color:#000080">00000000</span></div>
<div class="m" style="left:1055px;top:582px"><span style="color:#0000ff">10:0028</span>  <span style="color:#808000">00CFD500</span> <svg class="ar" width="14" height="16"><path d="M1 7.2H12.6M10.1 4.5L12.8 7.2L10.1 9.9" stroke="#0000ff" stroke-width="1" fill="none"/></svg> <span style="color:#000080">00000000</span></div>
<div class="m" style="left:1055px;top:598px"><span style="color:#0000ff">11:002C</span>  <span style="color:#808000">00CFD504</span> <svg class="ar" width="14" height="16"><path d="M1 7.2H12.6M10.1 4.5L12.8 7.2L10.1 9.9" stroke="#0000ff" stroke-width="1" fill="none"/></svg> <span style="color:#000080">00000000</span></div>
<div class="m" style="left:1055px;top:614px"><span style="color:#0000ff">12:0030</span>  <span style="color:#808000">00CFD508</span> <svg class="ar" width="14" height="16"><path d="M1 7.2H12.6M10.1 4.5L12.8 7.2L10.1 9.9" stroke="#0000ff" stroke-width="1" fill="none"/></svg> <span style="color:#000080">00000000</span></div>
<div class="m" style="left:1055px;top:630px"><span style="color:#0000ff">13:0034</span>  <span style="color:#808000">00CFD50C</span> <svg class="ar" width="14" height="16"><path d="M1 7.2H12.6M10.1 4.5L12.8 7.2L10.1 9.9" stroke="#0000ff" stroke-width="1" fill="none"/></svg> <span style="color:#000080">00000000</span></div>
<div class="m" style="left:1055px;top:646px"><span style="color:#0000ff">14:0038</span>  <span style="color:#808000">00CFD510</span> <svg class="ar" width="14" height="16"><path d="M1 7.2H12.6M10.1 4.5L12.8 7.2L10.1 9.9" stroke="#0000ff" stroke-width="1" fill="none"/></svg> <span style="color:#000080">00000000</span></div>
<div class="m" style="left:1055px;top:662px"><span style="color:#0000ff">15:003C</span>  <span style="color:#808000">00CFD514</span> <svg class="ar" width="14" height="16"><path d="M1 7.2H12.6M10.1 4.5L12.8 7.2L10.1 9.9" stroke="#0000ff" stroke-width="1" fill="none"/></svg> <span style="color:#000080">00000000</span></div>
<div class="m" style="left:1055px;top:678px"><span style="color:#0000ff">16:0040</span>  <span style="color:#808000">00CFD518</span> <svg class="ar" width="14" height="16"><path d="M1 7.2H12.6M10.1 4.5L12.8 7.2L10.1 9.9" stroke="#0000ff" stroke-width="1" fill="none"/></svg> <span style="color:#000080">00000000</span></div></body></html>
